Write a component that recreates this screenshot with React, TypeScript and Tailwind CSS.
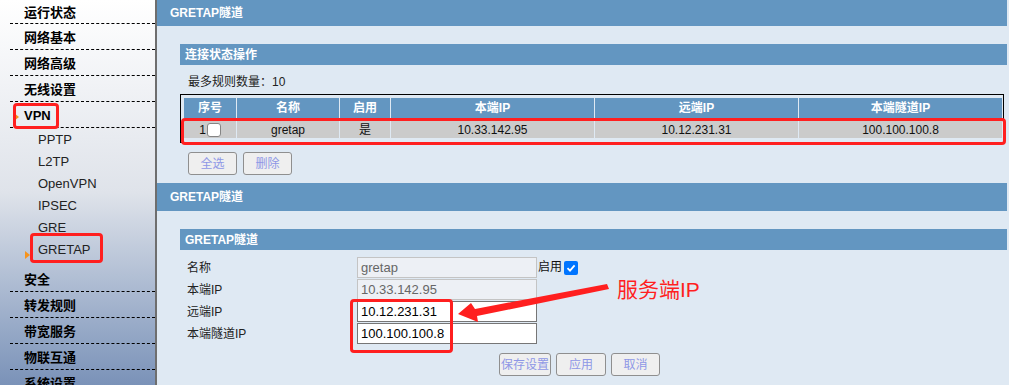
import React from "react";

const font = { fontFamily: '"Liberation Sans", "Noto Sans CJK SC", sans-serif' };

const topItems1 = ["运行状态", "网络基本", "网络高级", "无线设置"];
const subItems = ["PPTP", "L2TP", "OpenVPN", "IPSEC", "GRE", "GRETAP"];
const topItems2 = ["安全", "转发规则", "带宽服务", "物联互通", "系统设置"];

const MenuItem = ({ label, first }: { label: string; first?: boolean }) => (
  <div
    className={`ml-[10px] border-b border-dashed border-black flex items-center pl-[14px] text-[13px] font-bold text-black ${
      first ? "h-[24px] pt-[2px]" : "h-[26px] pt-[3px]"
    }`}
  >
    {label}
  </div>
);

const Btn = ({ children, w }: { children: React.ReactNode; w: string }) => (
  <button
    className={`${w} h-[23px] rounded-[3px] border border-[#8f8f8f] bg-[#efefef] text-[12px] whitespace-nowrap text-[#8e97e6] flex items-center justify-center`}
  >
    {children}
  </button>
);

const cols = ["序号", "名称", "启用", "本端IP", "远端IP", "本端隧道IP"];
const row = ["gretap", "是", "10.33.142.95", "10.12.231.31", "100.100.100.8"];

const RedBox = ({ cls }: { cls: string }) => (
  <div className={`absolute border-[3px] border-[#ff1f1f] rounded-[4px] pointer-events-none ${cls}`} />
);

export default function App() {
  return (
    <div className="relative w-[1009px] h-[385px] overflow-hidden flex bg-[#dfe9f3]" style={font}>
      {/* sidebar */}
      <div className="w-[157px] h-full shrink-0 border-r-2 border-[#6e6e6e] bg-gradient-to-b from-white via-[#dfe3ea] to-[#7a92b8]">
        {topItems1.map((t, i) => (
          <MenuItem key={t} label={t} first={i === 0} />
        ))}
        <div className="relative">
          <MenuItem label="VPN" />
          <div className="absolute left-[14px] top-[11px] w-0 h-0 border-y-[4px] border-y-transparent border-l-[5px] border-l-[#f7941d]" />
        </div>
        <div className="pt-[1px] pb-[5px]">
          {subItems.map((s) => (
            <div key={s} className="relative h-[22px] flex items-center pl-[38px] text-[13px] text-[#222]">
              {s}
              {s === "GRETAP" && (
                <div className="absolute left-[25px] top-[12px] w-0 h-0 border-y-[4px] border-y-transparent border-l-[5px] border-l-[#f7941d]" />
              )}
            </div>
          ))}
        </div>
        {topItems2.map((t) => (
          <MenuItem key={t} label={t} />
        ))}
      </div>

      {/* main */}
      <div className="flex-1 pr-[2px]">
        <div className="h-[26px] bg-[#6396c1] flex items-center pl-[13px] text-[12px] font-bold text-white">
          GRETAP隧道
        </div>

        <div className="ml-[23px] mt-[18px]">
          <div className="h-[21px] bg-[#6396c1] flex items-center pl-[5px] text-[12px] font-bold text-white">
            连接状态操作
          </div>
          <div className="h-[29px] flex items-center pt-[4px] pl-[8px] text-[12px] text-[#222]">
            最多规则数量：10
          </div>
          <div className="w-[824px] border border-black pt-[3px] pb-[4px] pl-[3px]">
            <div className="grid grid-cols-[52px_102px_50px_203px_203px_203px] gap-x-[1px] gap-y-[3px]">
              {cols.map((c) => (
                <div key={c} className="h-[20px] bg-[#6396c1] flex items-center justify-center text-[12px] font-bold text-white">
                  {c}
                </div>
              ))}
              <div className="h-[17px] bg-[#cbcbcb] flex items-center justify-center gap-[1px] text-[12px] text-[#111]">
                1
                <span className="w-[14px] h-[14px] rounded-[3px] border border-[#858585] bg-white" />
              </div>
              {row.map((r) => (
                <div key={r} className="h-[17px] bg-[#cbcbcb] flex items-center justify-center text-[12px] text-[#111]">
                  {r}
                </div>
              ))}
            </div>
          </div>
          <div className="flex gap-[6px] ml-[8px] mt-[9px]">
            <Btn w="w-[49px]">全选</Btn>
            <Btn w="w-[49px]">删除</Btn>
          </div>
        </div>

        <div className="mt-[8px] h-[28px] bg-[#6396c1] flex items-center pl-[13px] text-[12px] font-bold text-white">
          GRETAP隧道
        </div>

        <div className="ml-[23px] mt-[18px]">
          <div className="h-[21px] bg-[#6396c1] flex items-center pl-[5px] text-[12px] font-bold text-white">
            GRETAP隧道
          </div>
          <div className="pt-[7px] text-[12px] text-[#222]">
            <div className="h-[22px] flex items-start">
              <span className="w-[177px] pl-[7px] leading-[21px] pt-[1px]">名称</span>
              <div className="w-[180px] h-[21px] border border-[#c4c4c4] bg-[#edf0f5] pl-[3px] flex items-center text-[13px] text-[#666]">
                gretap
              </div>
              <span className="leading-[21px] ml-[1px] text-[#111]">启用</span>
              <span className="ml-[2px] mt-[4px] w-[14px] h-[14px] rounded-[2px] bg-[#0075ff] flex items-center justify-center">
                <svg width="10" height="10" viewBox="0 0 10 10">
                  <path d="M1.5 5.2 L4 7.6 L8.6 2.4" fill="none" stroke="white" strokeWidth="1.8" />
                </svg>
              </span>
            </div>
            <div className="h-[22px] flex items-start">
              <span className="w-[177px] pl-[7px] leading-[21px] pt-[1px]">本端IP</span>
              <div className="w-[180px] h-[21px] border border-[#c4c4c4] bg-[#edf0f5] pl-[3px] flex items-center text-[13px] text-[#666]">
                10.33.142.95
              </div>
            </div>
            <div className="h-[22px] flex items-start">
              <span className="w-[177px] pl-[7px] leading-[21px] pt-[1px]">远端IP</span>
              <div className="w-[180px] h-[21px] border border-[#767676] bg-white pl-[3px] flex items-center text-[13px] text-black">
                10.12.231.31
              </div>
            </div>
            <div className="h-[22px] flex items-start">
              <span className="w-[177px] pl-[7px] leading-[21px] pt-[1px]">本端隧道IP</span>
              <div className="w-[180px] h-[21px] border border-[#767676] bg-white pl-[3px] flex items-center text-[13px] text-black">
                100.100.100.8
              </div>
            </div>
          </div>
          <div className="flex gap-[5px] pl-[319px] mt-[8px]">
            <Btn w="w-[52px]">保存设置</Btn>
            <Btn w="w-[50px]">应用</Btn>
            <Btn w="w-[49px]">取消</Btn>
          </div>
        </div>
      </div>

      {/* annotations */}
      <RedBox cls="left-[13px] top-[103px] w-[46px] h-[26px]" />
      <RedBox cls="left-[30px] top-[233px] w-[73px] h-[30px]" />
      <RedBox cls="left-[181px] top-[118px] w-[825px] h-[27px]" />
      <RedBox cls="left-[350px] top-[299px] w-[103px] h-[54px]" />
      <svg className="absolute left-0 top-0 pointer-events-none" width="1009" height="385">
        <polygon points="607,284 609,289 477,316 478,322 458,314 471,303 475,309" fill="#ff1f1f" />
      </svg>
      <div className="absolute left-[617px] top-[277px] text-[21px] leading-[26px] text-[#ff1f1f]">服务端IP</div>
    </div>
  );
}
